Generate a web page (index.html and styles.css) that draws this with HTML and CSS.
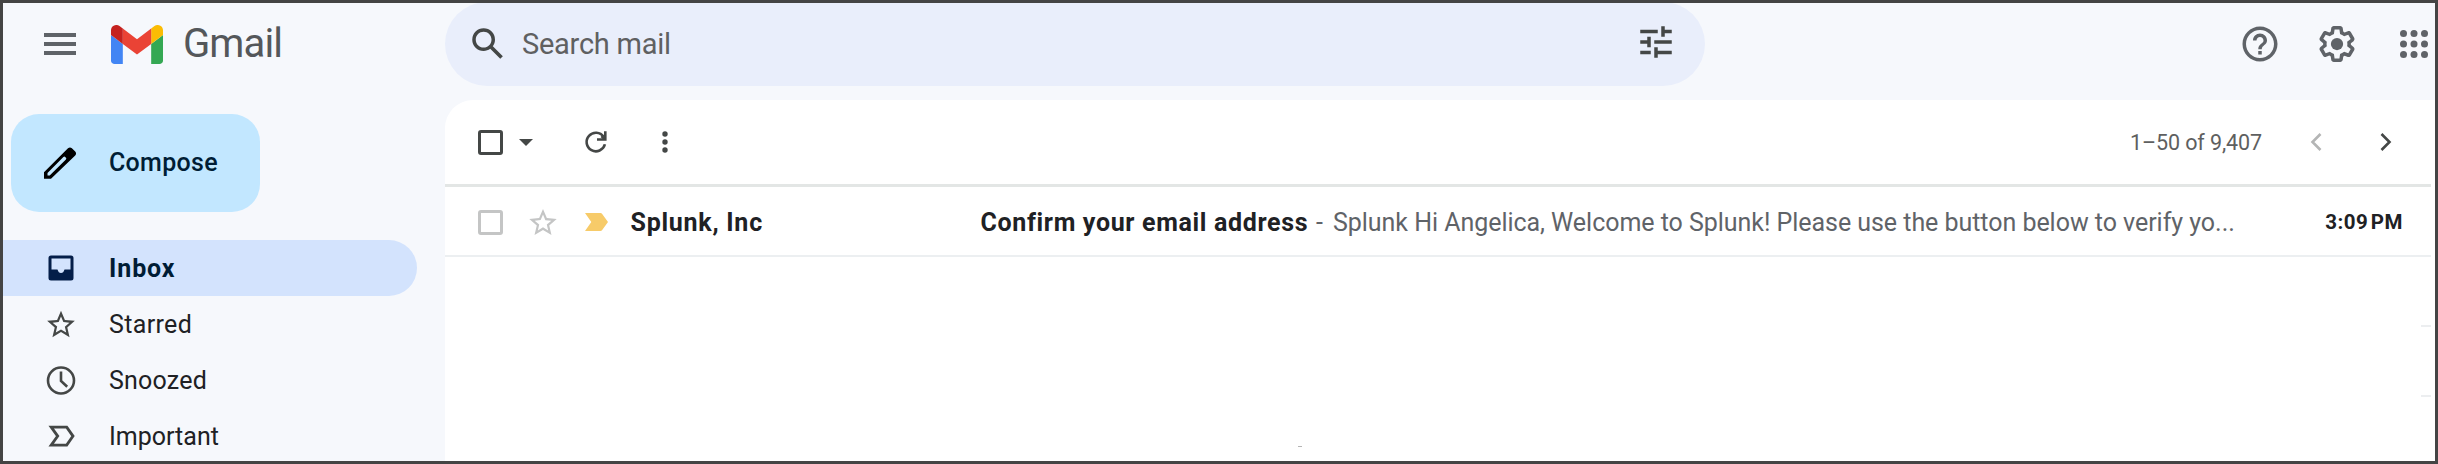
FILE: index.html
```html
<!DOCTYPE html>
<html lang="en">
<head>
<meta charset="utf-8">
<title>Gmail - Inbox</title>
<link rel="stylesheet" href="styles.css">
</head>
<body>
<div class="app">
  <header class="header">
    <div class="brand">
      <svg class="menu-icon" width="32" height="22" viewBox="0 0 32 22" fill="#5f6368"><path d="M0 0h32v4H0zM0 9h32v4H0zM0 18h32v4H0z"/></svg>
      <svg class="logo" width="52" height="39" viewBox="52 42 88 66"><path fill="#4285f4" d="M58 108h14V74L52 59v43c0 3.32 2.69 6 6 6"/><path fill="#34a853" d="M120 108h14c3.32 0 6-2.69 6-6V59l-20 15"/><path fill="#fbbc04" d="M120 48v26l20-15v-8c0-7.42-8.47-11.65-14.4-7.2"/><path fill="#ea4335" d="M72 74V48l24 18 24-18v26L96 92"/><path fill="#c5221f" d="M52 51v8l20 15V48l-5.6-4.2c-5.94-4.45-14.4-.22-14.4 7.2"/></svg>
      <span class="brand-name">Gmail</span>
    </div>
    <div class="search">
      <svg width="42" height="42" viewBox="0 0 24 24" fill="#444746"><path d="M20.49 19l-5.73-5.73C15.53 12.2 16 10.91 16 9.5A6.5 6.5 0 1 0 9.5 16c1.41 0 2.7-.47 3.77-1.24L19 20.49 20.49 19zM5 9.5C5 7.01 7.01 5 9.5 5S14 7.01 14 9.5 11.99 14 9.5 14 5 11.99 5 9.5z"/></svg>
      <span class="search-text">Search mail</span>
      <svg class="tune" width="42" height="42" viewBox="0 0 24 24" fill="#444746"><path d="M3 17v2h6v-2H3zM3 5v2h10V5H3zm10 16v-2h8v-2h-8v-2h-2v6h2zM7 9v2H3v2h4v2h2V9H7zm14 4v-2H11v2h10zm-6-4h2V7h4V5h-4V3h-2v6z"/></svg>
    </div>
    <div class="header-actions">
      <svg width="42" height="42" viewBox="0 0 24 24" fill="#5f6368"><path d="M11 18h2v-2h-2v2zm1-16C6.48 2 2 6.48 2 12s4.48 10 10 10 10-4.48 10-10S17.52 2 12 2zm0 18c-4.41 0-8-3.59-8-8s3.59-8 8-8 8 3.59 8 8-3.59 8-8 8zm0-14c-2.21 0-4 1.79-4 4h2c0-1.1.9-2 2-2s2 .9 2 2c0 2-3 1.75-3 5h2c0-2.25 3-2.5 3-5 0-2.21-1.79-4-4-4z"/></svg>
      <svg width="42" height="42" viewBox="0 0 24 24" fill="#5f6368"><path d="M13.85 22.25h-3.7c-.74 0-1.36-.54-1.45-1.27l-.27-1.89c-.27-.14-.53-.29-.79-.46l-1.8.72c-.7.26-1.47-.03-1.81-.65L2.2 15.53c-.35-.66-.2-1.44.36-1.88l1.53-1.19c-.01-.15-.02-.3-.02-.46 0-.15.01-.31.02-.46l-1.52-1.19c-.59-.45-.74-1.26-.37-1.88l1.85-3.19c.34-.62 1.11-.9 1.79-.63l1.81.73c.26-.17.52-.32.78-.46l.27-1.91c.09-.7.71-1.25 1.44-1.25h3.7c.74 0 1.36.54 1.45 1.27l.27 1.89c.27.14.53.29.79.46l1.8-.72c.71-.26 1.48.03 1.82.65l1.84 3.18c.36.66.2 1.44-.36 1.88l-1.52 1.19c.01.15.02.3.02.46s-.01.31-.02.46l1.52 1.19c.56.45.72 1.23.37 1.86l-1.86 3.22c-.34.62-1.11.9-1.8.63l-1.8-.72c-.26.17-.52.32-.78.46l-.27 1.91c-.1.68-.72 1.22-1.46 1.22zm-3.23-2h2.76l.37-2.55.53-.22c.44-.18.88-.44 1.34-.78l.45-.34 2.38.96 1.38-2.4-2.03-1.58.07-.56c.03-.26.06-.51.06-.78s-.03-.53-.06-.78l-.07-.56 2.03-1.58-1.39-2.4-2.39.96-.45-.35c-.42-.32-.87-.58-1.33-.77l-.52-.22-.37-2.55h-2.76l-.37 2.55-.53.21c-.44.19-.88.44-1.34.79l-.45.33-2.38-.95-1.39 2.39 2.03 1.58-.07.56a7 7 0 0 0-.06.79c0 .26.02.53.06.78l.07.56-2.03 1.58 1.38 2.4 2.39-.96.45.35c.43.33.86.58 1.33.77l.53.22.38 2.55z"/><circle cx="12" cy="12" r="3.5"/></svg>
      <svg width="42" height="42" viewBox="0 0 24 24" fill="#5f6368"><circle cx="6" cy="6" r="2"/><circle cx="12" cy="6" r="2"/><circle cx="18" cy="6" r="2"/><circle cx="6" cy="12" r="2"/><circle cx="12" cy="12" r="2"/><circle cx="18" cy="12" r="2"/><circle cx="6" cy="18" r="2"/><circle cx="12" cy="18" r="2"/><circle cx="18" cy="18" r="2"/></svg>
    </div>
  </header>
  <div class="body">
    <aside class="sidebar">
      <div class="compose">
        <svg width="32" height="32" viewBox="0 0 32 32"><path fill-rule="evenodd" d="M0 31.800v-6.600L24 1.300q2-1.700 3.900 0l3.300 3.300q1.700 1.900 0 3.900L7 31.800zM3.500 28.500h2.200L21.900 12.500q.8-1 0-1.800l-.7-.7q-.9-.8-1.800 0L3.500 26.100z"/></svg>
        <span>Compose</span>
      </div>
      <nav class="nav">
        <div class="nav-item active"><svg width="36" height="36" viewBox="0 0 36 36" fill="#041e49"><path fill-rule="evenodd" d="M8 5.500h20a2.500 2.500 0 0 1 2.500 2.500v20a2.500 2.500 0 0 1-2.500 2.500H8A2.500 2.500 0 0 1 5.500 28V8A2.500 2.500 0 0 1 8 5.500zM8.500 8.500v11h6q1 3.500 3.500 3.500t3.500-3.500h6v-11z"/></svg><span>Inbox</span></div>
        <div class="nav-item starred"><svg width="36" height="36" viewBox="-1 -1 26 26" fill="#444746"><path d="M22 9.740l-7.190-.620L12 2.500 9.190 9.130 2 9.740l5.460 4.730-1.640 7.030L12 17.770l6.180 3.730-1.630-7.030L22 9.740zM12 15.900l-3.760 2.270 1-4.280-3.320-2.880 4.380-.380L12 6.600l1.710 4.040 4.380.380-3.320 2.880 1 4.280L12 15.900z"/></svg><span>Starred</span></div>
        <div class="nav-item snoozed"><svg width="36" height="36" viewBox="0 0 36 36" fill="none" stroke="#444746" stroke-width="2.600"><circle cx="18" cy="18.500" r="13"/><path d="M18 9.500v9.500l6.200 5.800"/></svg><span>Snoozed</span></div>
        <div class="nav-item"><svg width="36" height="36" viewBox="0 0 36 36" fill="none" stroke="#444746" stroke-width="2.800"><path d="M8.200 9.100h15.500l6.300 9-6.300 9H8.200l6.500-9z"/></svg><span>Important</span></div>
      </nav>
    </aside>
    <main class="main">
      <div class="toolbar">
        <span class="checkbox"></span>
        <svg class="caret" width="14" height="7" viewBox="0 0 14 7" fill="#444746"><path d="M0 0h14L7 7z"/></svg>
        <svg class="refresh" width="24" height="24" viewBox="0 0 24 24" fill="none" stroke="#444746" stroke-width="2.600"><path d="M20.900 14.300A9.300 9.300 0 1 1 19.600 6.800"/><path d="M21.300 1.300v8.200h-8.300"/><path d="M17.500 6l3 3"/></svg>
        <svg class="more" width="6" height="22" viewBox="0 0 6 22" fill="#444746"><circle cx="3" cy="3" r="2.700"/><circle cx="3" cy="11" r="2.700"/><circle cx="3" cy="19" r="2.700"/></svg>
        <span class="count">1–50 of 9,407</span>
        <svg class="prev" width="12" height="18" viewBox="0 0 12 18" fill="none" stroke="#b4b5b5" stroke-width="2.600"><path d="M10.500 1L2.500 9l8 8"/></svg>
        <svg class="next" width="12" height="18" viewBox="0 0 12 18" fill="none" stroke="#444746" stroke-width="2.600"><path d="M1.500 1l8 8-8 8"/></svg>
      </div>
      <div class="mail">
        <span class="checkbox light"></span>
        <svg class="star" width="34" height="34" viewBox="-.4 -.4 24.800 24.800" fill="#c4c5c5"><path d="M22 9.740l-7.190-.620L12 2.500 9.190 9.130 2 9.740l5.460 4.730-1.640 7.030L12 17.770l6.180 3.730-1.630-7.030L22 9.740zM12 15.900l-3.760 2.270 1-4.280-3.320-2.880 4.380-.380L12 6.600l1.710 4.040 4.380.380-3.320 2.880 1 4.280L12 15.900z"/></svg>
        <svg class="marker" width="23" height="18" viewBox="0 0 23 18" fill="#f7cb69"><path d="M0 0h15.500Q16.500 0 17.200 1L23 9l-5.800 8q-.7 1-1.700 1H0l6.300-9z"/></svg>
        <span class="sender">Splunk, Inc</span>
        <span class="subject">Confirm your email address</span>
        <span class="dash">-</span>
        <span class="snippet">Splunk Hi Angelica, Welcome to Splunk! Please use the button below to verify yo...</span>
        <span class="time">3:09 PM</span>
      </div>
      <div class="row-edge"></div>
      <div class="row-edge"></div>
      <div class="speck"></div>
    </main>
  </div>
</div>
</body>
</html>
```
FILE: styles.css
```css
* { box-sizing: border-box; }
html, body { height: 464px; overflow: hidden; }
body { margin: 0; font-family: Roboto, "Liberation Sans", sans-serif; }
svg { display: block; flex: none; }
span { white-space: nowrap; flex: none; }

.app {
  width: 2438px;
  height: 464px;
  border: 3px solid #444444;
  background: #f6f8fc;
  overflow: hidden;
}

.header { display: flex; align-items: center; height: 82px; margin-bottom: 15px; }
.brand { display: flex; align-items: center; width: 442px; padding-left: 41px; }
.logo { margin-left: 35px; }
.brand-name { margin-left: 20px; font-size: 40px; line-height: 40px; letter-spacing: -0.9px; color: #54575a; }
.search {
  display: flex;
  align-items: center;
  width: 1260px;
  height: 84px;
  padding: 0 28px 0 22px;
  border-radius: 42px;
  background: #e9eefb;
}
.search-text { margin-left: 13px; font-size: 29px; letter-spacing: -0.25px; color: #5f6061; }
.tune { margin: -4px 0 0 auto; }
.header-actions { display: flex; margin-left: auto; gap: 35px; }

.body { display: flex; height: 361px; }
.sidebar { width: 442px; padding-top: 14px; }
.compose {
  display: flex;
  align-items: center;
  width: 249px;
  height: 98px;
  margin-left: 8px;
  padding-left: 33px;
  border-radius: 28px;
  background: #c2e7ff;
  color: #001d35;
  font-size: 25px;
  font-weight: 500;
}
.compose span { margin-left: 33px; padding-bottom: 2px; letter-spacing: 0.3px; }
.nav { margin-top: 28px; }
.nav-item {
  display: flex;
  align-items: center;
  width: 414px;
  height: 56px;
  padding-left: 39.5px;
  font-size: 25px;
  color: #202124;
}
.nav-item span { margin-left: 30.5px; }
.active { border-radius: 0 28px 28px 0; background: #d3e3fd; color: #001d35; font-weight: 700; letter-spacing: 0.9px; }
.starred { letter-spacing: 0.35px; }
.snoozed { letter-spacing: 0.2px; }

.main { width: 1990px; padding-right: 4px; border-top-left-radius: 28px; background: #fff; }
.toolbar { display: flex; align-items: center; height: 87px; padding-left: 33px; border-bottom: 3px solid #e3e6e5; }
.checkbox { width: 25px; height: 25px; border: 3px solid #444746; border-radius: 3px; }
.light { border-color: #c4c5c5; }
.caret { margin-left: 16px; }
.refresh { margin-left: 51px; }
.more { margin-left: 54px; }
.count { margin-left: auto; font-size: 21.5px; letter-spacing: -0.1px; color: #5e5f60; }
.prev { margin-left: 48px; }
.next { margin: 0 39px 0 58px; }

.mail {
  display: flex;
  align-items: center;
  height: 70px;
  padding: 2px 28px 0 33px;
  border-bottom: 2px solid #eceff1;
  font-size: 25px;
}
.star { margin-left: 23px; }
.marker { margin-left: 25px; }
.sender { width: 350px; margin-left: 22.500px; font-weight: 700; letter-spacing: 0.75px; color: #202124; }
.subject { width: 335.5px; font-weight: 700; letter-spacing: 0.66px; color: #202124; }
.dash { width: 17px; color: #5f6368; }
.snippet { letter-spacing: -0.04px; color: #5f6368; }
.time { margin-left: auto; font-size: 20.5px; font-weight: 700; letter-spacing: 0.5px; word-spacing: -3px; color: #202124; }

.row-edge { width: 10px; height: 2px; margin: 68px 0 0 auto; background: #eceef0; }
.speck { width: 4px; height: 1px; margin: 49px 0 0 853px; background: #b5b5b5; }
```
